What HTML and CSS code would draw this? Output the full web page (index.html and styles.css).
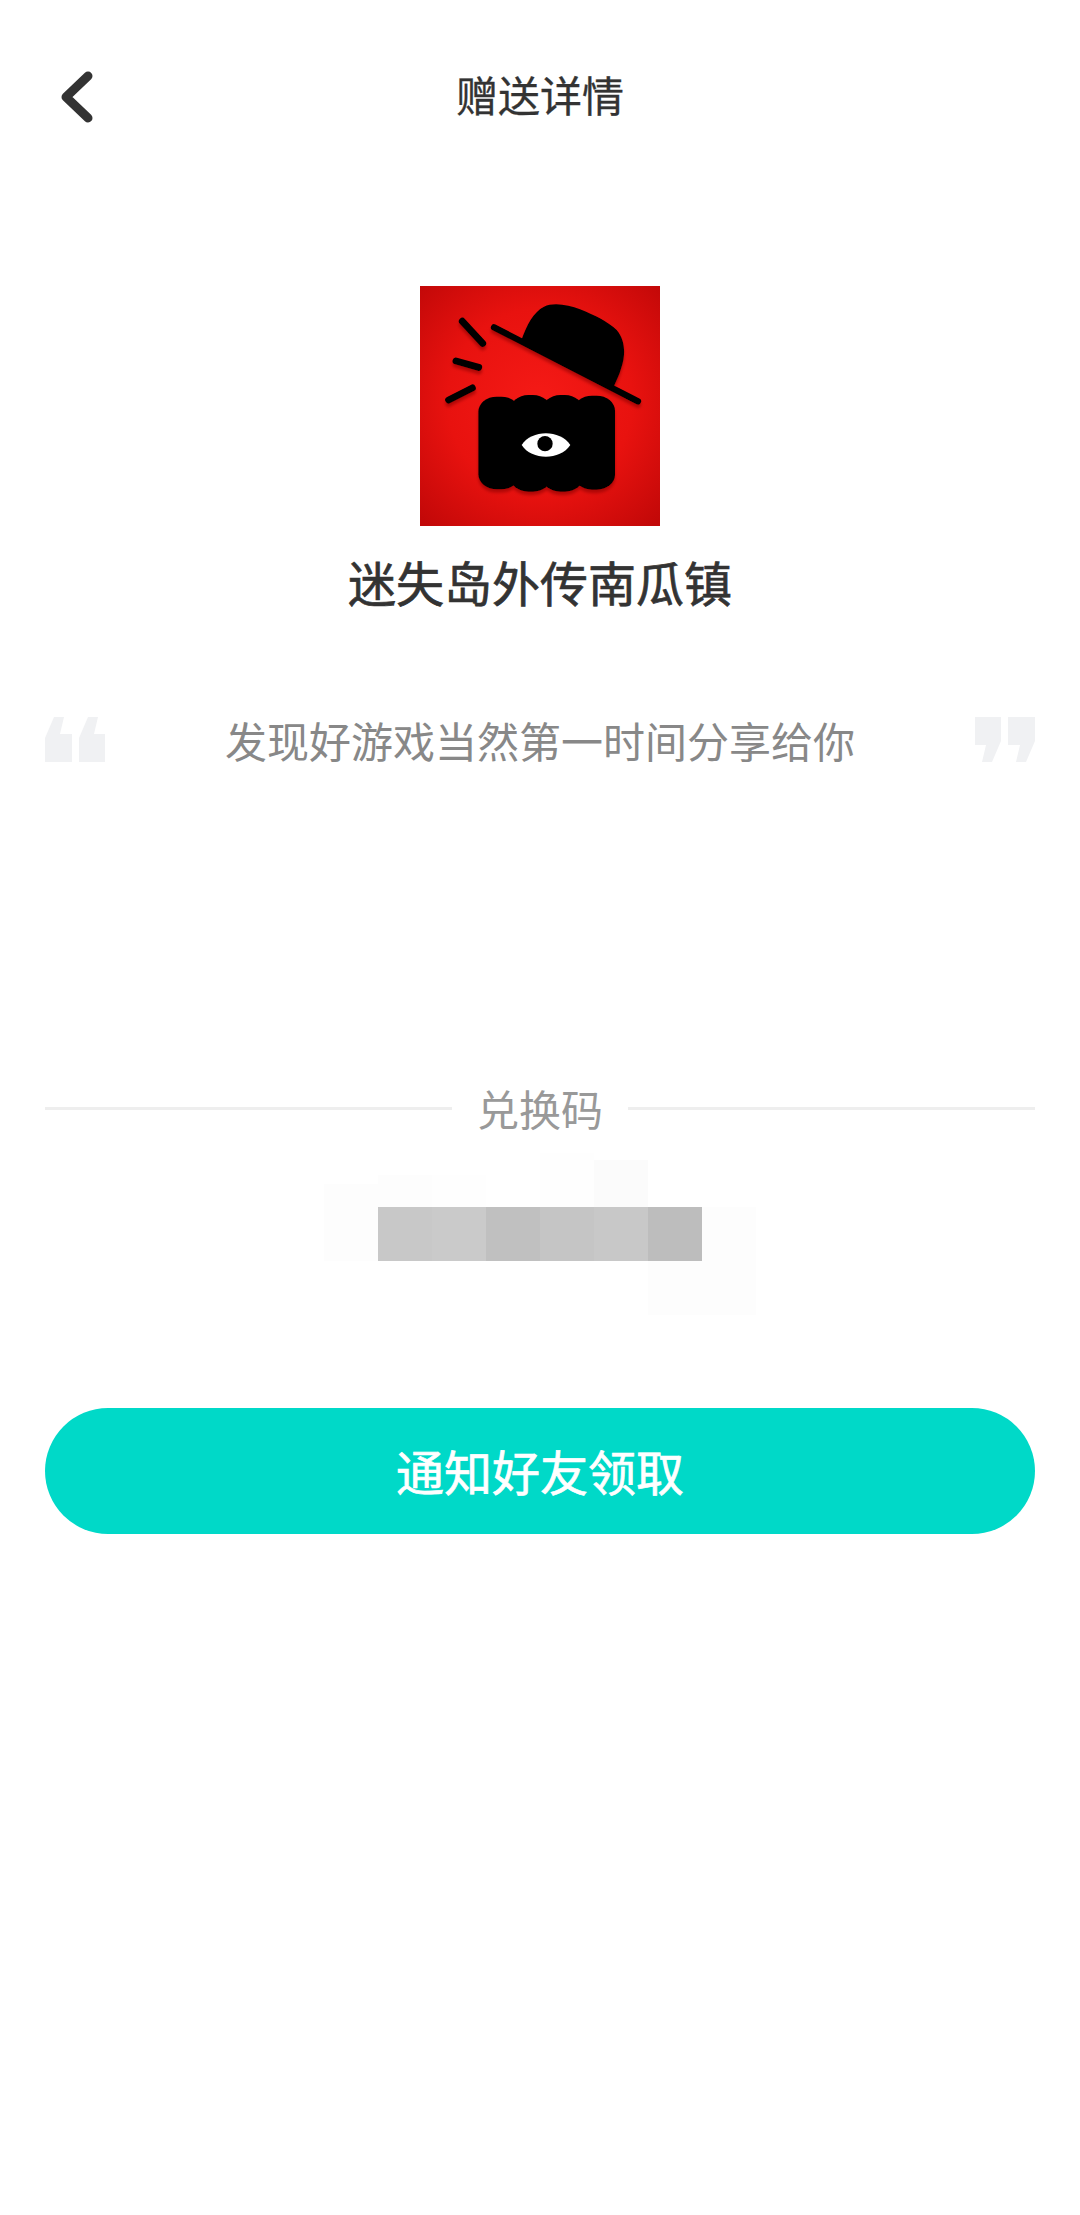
FILE: index.html
```html
<!DOCTYPE html>
<html lang="zh-CN">
  <head>
    <meta charset="UTF-8" />
    <meta name="viewport" content="width=device-width, initial-scale=1.0" />
    <title>赠送详情</title>
    <link rel="stylesheet" href="styles.css">
  </head>
  <body>
    <div class="nav">
      <a class="backBtn">
        <svg width="50" height="64" viewBox="0 0 50 64">
          <path d="M38 11 L16 32 L38 53" fill="none" stroke="#333" stroke-width="9" stroke-linecap="round" stroke-linejoin="round" />
        </svg>
      </a>
      <h1 class="navTitle">赠送详情</h1>
    </div>

    <div class="game">
      <svg class="gameIcon" width="240" height="240" viewBox="0 0 720 720">
        <defs>
          <radialGradient id="bg" cx="50%" cy="48%" r="70%">
            <stop offset="0" stop-color="#f51a16" />
            <stop offset="0.55" stop-color="#e8120f" />
            <stop offset="1" stop-color="#c20808" />
          </radialGradient>
          <filter id="shade" x="-10%" y="-10%" width="120%" height="120%">
            <feDropShadow dx="0" dy="10" stdDeviation="4" flood-color="#8a0606" flood-opacity="0.6" />
          </filter>
        </defs>
        <rect width="720" height="720" fill="url(#bg)" />
        <g filter="url(#shade)">
          <g fill="none" stroke="#000" stroke-linecap="round">
            <path d="M127 106 L188 172" stroke-width="21" />
            <path d="M108 225 L176 244" stroke-width="21" />
            <path d="M86 342 L157 306" stroke-width="21" />
            <path d="M222 124 L654 346" stroke-width="19" />
          </g>
          <path d="M305 160 C320 118 340 78 372 62 C400 48 445 56 480 70 C525 88 565 108 590 132 C615 160 618 205 604 245 C598 268 588 285 578 310 Z" />
          <rect x="175" y="332" width="124" height="278" rx="55" ry="45" />
          <rect x="270" y="327" width="124" height="290" rx="55" ry="45" />
          <rect x="366" y="327" width="124" height="290" rx="55" ry="45" />
          <rect x="461" y="329" width="124" height="282" rx="55" ry="45" />
        </g>
        <path d="M305 477 C335 430 420 430 451 477 C420 524 335 524 305 477 Z" fill="#fff" />
        <circle cx="375" cy="473" r="23" fill="#000" />
      </svg>
      <h2 class="gameName">迷失岛外传南瓜镇</h2>
    </div>

    <div class="quote">
      <svg class="quoteMark" width="60" height="45" viewBox="0 0 60 45">
        <path d="M9 0 H19 L15 17 H27 V45 H0 V21 Z M43 0 H53 L49 17 H60 V45 H34 V21 Z" />
      </svg>
      <p class="quoteText">发现好游戏当然第一时间分享给你</p>
      <svg class="quoteMark flip" width="60" height="45" viewBox="0 0 60 45">
        <path d="M9 0 H19 L15 17 H27 V45 H0 V21 Z M43 0 H53 L49 17 H60 V45 H34 V21 Z" />
      </svg>
    </div>

    <div class="codeTitle">
      <hr />
      <span>兑换码</span>
      <hr />
    </div>

    <div class="mosaic">
      <i></i>
      <i class="low c1"></i>
      <i class="low c2"></i>
      <i></i>
      <i class="c3"></i>
      <i class="tall c4"></i>
      <i></i>
      <i></i>

      <i class="c1 up"></i>
      <i class="g1"></i>
      <i class="g2"></i>
      <i class="g3"></i>
      <i class="g4"></i>
      <i class="g5"></i>
      <i class="g6"></i>
      <i class="c1"></i>

      <i></i>
      <i></i>
      <i></i>
      <i></i>
      <i></i>
      <i></i>
      <i class="c1"></i>
      <i class="c1"></i>
    </div>

    <button class="notifyBtn">通知好友领取</button>
  </body>
</html>
```

FILE: styles.css
```css
body {
  margin: 0;
  background: #fff;
  font-family: "Noto Sans CJK SC", "Noto Sans", sans-serif;
}
.nav {
  display: flex;
  align-items: center;
  justify-content: center;
  position: relative;
  height: 192px;
}
.backBtn {
  position: absolute;
  left: 50px;
  top: 65px;
  line-height: 0;
}
.navTitle {
  margin: 0 0 5px;
  font-size: 42px;
  line-height: 60px;
  font-weight: 400;
  color: #333;
  -webkit-text-stroke: 0.3px #333;
}
.game {
  display: flex;
  flex-direction: column;
  align-items: center;
  padding-top: 94px;
}
.gameName {
  margin: 25px 0 3px;
  font-size: 48px;
  line-height: 60px;
  font-weight: 400;
  color: #333;
  -webkit-text-stroke: 0.7px #333;
}
.quote {
  display: flex;
  align-items: center;
  justify-content: space-between;
  margin-top: 103px;
  padding: 0 45px;
  height: 45px;
}
.quoteMark {
  fill: #f0f1f3;
}
.flip {
  transform: rotate(180deg);
}
.quoteText {
  margin: 0;
  font-size: 42px;
  line-height: 45px;
  color: #888;
}
.codeTitle {
  display: flex;
  align-items: center;
  gap: 25px;
  margin-top: 316px;
  padding: 0 45px;
  height: 60px;
}
.codeTitle hr {
  flex: 1;
  margin: 0;
  border: 0;
  height: 3px;
  background: #eee;
}
.codeTitle span {
  font-size: 42px;
  line-height: 60px;
  color: #999;
}
.mosaic {
  display: grid;
  grid-template-columns: repeat(8, 54px);
  grid-template-rows: repeat(3, 54px);
  justify-content: center;
  margin-top: 15px;
}
.mosaic i {
  display: block;
}
.mosaic .low {
  align-self: end;
  height: 32px;
}
.mosaic .tall {
  align-self: end;
  height: 47px;
}
.mosaic .up {
  margin-top: -23px;
}
.c1 { background: #fdfdfd; }
.c2 { background: #fefefe; }
.c3 { background: #fefefe; }
.c4 { background: #fbfbfb; }
.g1 { background: #c8c8c8; }
.g2 { background: #cacaca; }
.g3 { background: #c0c0c0; }
.g4 { background: #c5c5c5; }
.g5 { background: #c8c8c8; }
.g6 { background: #bdbdbd; }
.notifyBtn {
  display: block;
  width: 990px;
  height: 126px;
  margin: 93px auto 0;
  padding: 0 0 3px;
  border: 0;
  border-radius: 63px;
  background: #00d9c8;
  color: #fff;
  font-family: inherit;
  font-size: 48px;
  font-weight: 400;
  -webkit-text-stroke: 0.7px #fff;
}
```
